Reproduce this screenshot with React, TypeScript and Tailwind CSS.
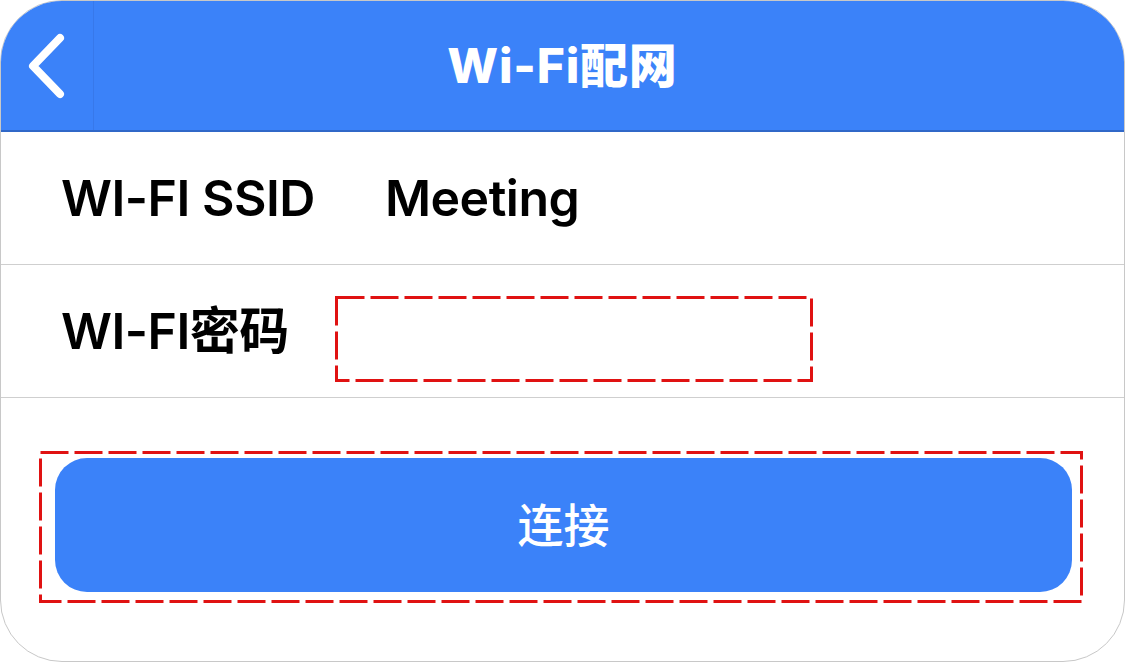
import React from 'react';

function DashedFrame() {
  return (
    <svg className="absolute inset-0 w-full h-full pointer-events-none" preserveAspectRatio="none">
      <rect
        x="1.5"
        y="1.5"
        width="calc(100% - 3px)"
        height="calc(100% - 3px)"
        fill="none"
        stroke="#e01212"
        strokeWidth="3"
        strokeDasharray="28 6"
      />
    </svg>
  );
}

export default function App() {
  const font = { fontFamily: 'Inter, "Noto Sans CJK SC", sans-serif' };

  return (
    <div className="w-[1125px] h-[662px] bg-white" style={font}>
      <div className="w-[1125px] h-[662px] rounded-[62px] border border-[#c8c8c8] overflow-hidden flex flex-col bg-white">
        {/* header */}
        <div className="h-[131px] shrink-0 bg-[#3b82f9] border-b-2 border-[#3068c8] flex items-center relative">
          <div className="w-[93px] h-full flex items-center justify-center border-r border-[#3778ea]">
            <svg width="40" height="66" viewBox="0 0 40 66" fill="none">
              <path d="M33 5 L6 33 L33 61" stroke="white" strokeWidth="8" strokeLinecap="round" strokeLinejoin="round" />
            </svg>
          </div>
          <h1 className="absolute left-0 right-0 text-center text-white text-[48px] font-extrabold tracking-[0.8px] pointer-events-none">
            Wi-Fi配网
          </h1>
        </div>

        {/* ssid row */}
        <div className="h-[133px] shrink-0 border-b border-[#cfcfcf] flex items-center pl-[60px]">
          <span className="text-[50px] font-semibold text-black tracking-[-0.5px]">WI-FI SSID</span>
          <span className="ml-[70px] text-[50px] font-semibold text-black tracking-[-0.5px]">Meeting</span>
        </div>

        {/* password row */}
        <div className="h-[133px] shrink-0 border-b border-[#cfcfcf] flex items-center pl-[60px]">
          <span className="text-[50px] font-semibold text-black tracking-[-0.5px]">WI-FI密码</span>
          <div className="relative ml-[46px] mt-[16px] w-[478px] h-[86px]">
            <DashedFrame />
            <input className="w-full h-full bg-transparent outline-none px-4 text-[40px]" type="password" />
          </div>
        </div>

        {/* connect */}
        <div className="pl-[38px] pt-[53px]">
          <div className="relative w-[1044px] h-[152px] pl-[16px] pr-[11px] pt-[7px] pb-[11px]">
            <DashedFrame />
            <button className="w-full h-full rounded-[32px] bg-[#3b82f9] text-white text-[46px] font-medium flex items-center justify-center">
              连接
            </button>
          </div>
        </div>
      </div>
    </div>
  );
}
